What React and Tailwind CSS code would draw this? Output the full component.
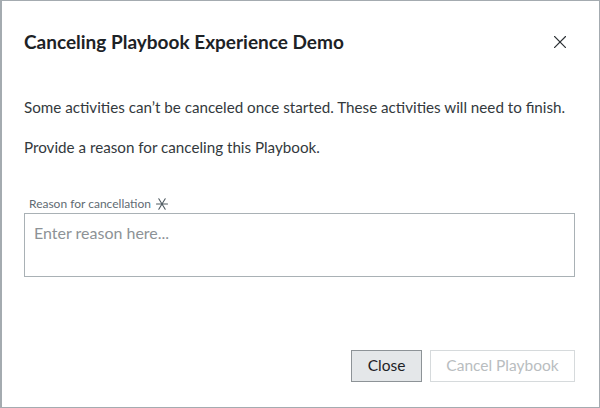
const FONT = { fontFamily: "Lato, 'Open Sans', sans-serif" };

const RequiredMark = () => (
	<svg width="12" height="12" viewBox="0 0 12 12" className="ml-[5px] inline-block" aria-hidden="true">
		<g stroke="#4f5a61" strokeWidth="1.1" strokeLinecap="round">
			<line x1="0.5" y1="6" x2="11.5" y2="6" />
			<line x1="2.8" y1="0.8" x2="9.2" y2="11.2" />
			<line x1="9.2" y1="0.8" x2="2.8" y2="11.2" />
		</g>
	</svg>
);

const CloseIcon = () => (
	<svg width="12" height="12" viewBox="0 0 12 12" aria-hidden="true">
		<g stroke="#2b3034" strokeWidth="1.2" strokeLinecap="square">
			<line x1="0.5" y1="0.5" x2="11.5" y2="11.5" />
			<line x1="11.5" y1="0.5" x2="0.5" y2="11.5" />
		</g>
	</svg>
);

export default function App() {
	return (
		<div
			className="w-[600px] h-[408px] bg-white border border-l-2 border-[#a4abb0] flex flex-col text-[#2b2f33]"
			style={FONT}
		>
			<div className="flex items-center justify-between pl-[22px] pr-[33px] pt-[29px]">
				<h2 className="text-[19px] font-bold leading-6 text-[#1d2226]">
					Canceling Playbook Experience Demo
				</h2>
				<button className="flex items-center">
					<CloseIcon />
				</button>
			</div>

			<div className="px-[22px] pt-[43px] text-[15.2px] leading-5 text-[#33393d]">
				<p>Some activities can’t be canceled once started. These activities will need to finish.</p>
				<p className="mt-5">Provide a reason for canceling this Playbook.</p>
			</div>

			<div className="px-[22px] pt-[39px]">
				<label className="flex items-center text-xs text-[#5f6b73] mb-[1px] pl-[5px]">
					Reason for cancellation
					<RequiredMark />
				</label>
				<textarea
					className="w-[551px] h-[64px] border border-[#a9b1b5] px-[9px] pt-[7px] text-base text-[#33393d] placeholder:text-[#8d9296] resize-none outline-none block"
					placeholder="Enter reason here..."
					style={FONT}
				/>
			</div>

			<div className="flex-1" />

			<div className="flex justify-end gap-[8px] pr-[24px] pb-[25px]">
				<button className="h-[32px] w-[71px] bg-[#e4e7e9] border border-[#8d9397] text-[15.5px] text-[#1d2226]">
					Close
				</button>
				<button
					disabled
					className="h-[32px] w-[145px] bg-white border border-[#d6dadc] text-[15.5px] text-[#b9bdc0]"
				>
					Cancel Playbook
				</button>
			</div>
		</div>
	);
}
